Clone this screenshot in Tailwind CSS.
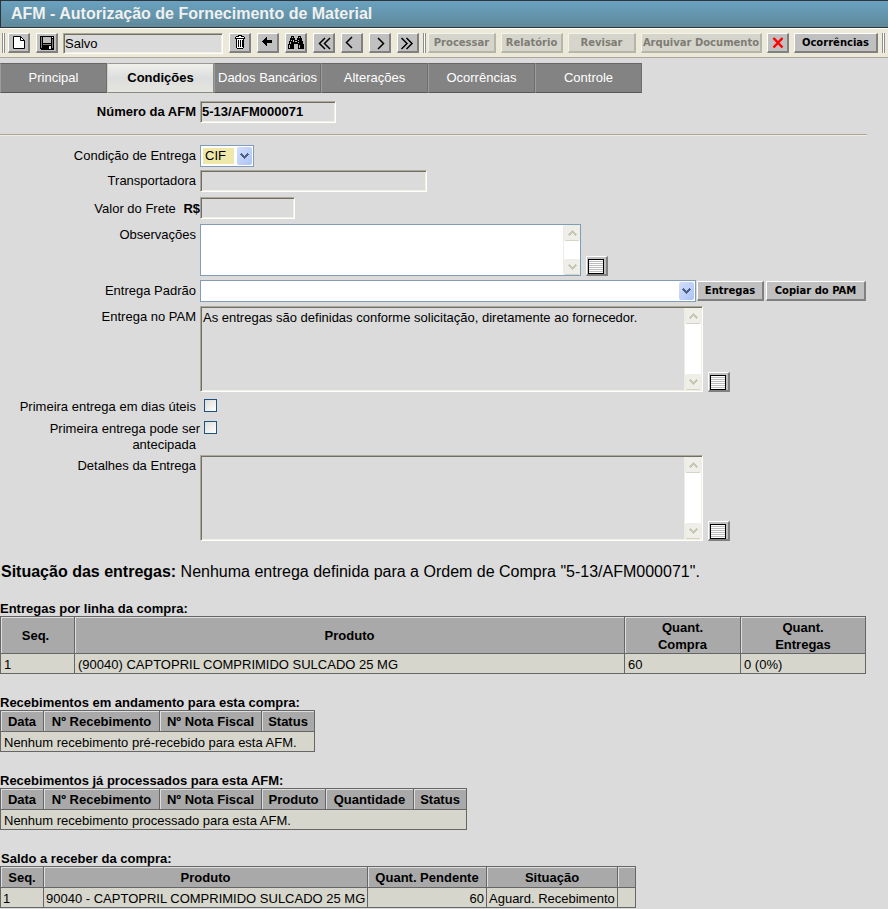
<!DOCTYPE html>
<html lang="pt-BR">
<head>
<meta charset="utf-8">
<meta name="viewport" content="width=device-width, initial-scale=1">
<title>AFM - Autorização de Fornecimento de Material</title>
<script src="https://cdn.jsdelivr.net/npm/@tailwindcss/browser@4"></script>
</head>
<body class="bg-[#dbdbdb] font-['Liberation_Sans',Arial,sans-serif] text-[13px] leading-4 text-black">

<svg class="hidden" aria-hidden="true">
  <symbol id="list" viewBox="0 0 16 15">
    <rect x="0.5" y="0.5" width="15" height="14" fill="#fff" stroke="#000"/>
    <path d="M1 2.5H15M1 4.5H15M1 6.5H15M1 8.5H15M1 10.5H15M1 12.5H15" stroke="#bdbdbd"/>
  </symbol>
  <symbol id="drop" viewBox="0 0 9 6"><path d="M1 0H2V1H3V2H4V3H5V2H6V1H7V0H8V1H9V2H8V3H7V4H6V5H5V6H4V5H3V4H2V3H1V2H0V1H1Z"/></symbol>
</svg>

<header class="flex h-7 items-center border-y border-l border-[#303438] bg-linear-to-b from-[#69a2c0] to-[#60899a] pl-[10px]">
  <h1 class="text-[16px] leading-6 font-bold text-[#f0f0ee]">AFM - Autorização de Fornecimento de Material</h1>
</header>

<div role="toolbar" aria-label="Ações" class="flex h-[30px] items-center border-t border-b border-t-white border-b-[#aca899] bg-[#ece9d8] pl-[2px] whitespace-nowrap">
  <span class="mr-[3px] h-5 w-[3px] border-x border-[#8d8d94] bg-white"></span>
  <div class="flex items-center gap-[6px]">
    <button aria-label="Novo" class="h-5 w-[22px] border-t border-l border-r-2 border-b-2 border-t-white border-l-white border-r-[#808080] border-b-[#808080] bg-[#c0c0c0]">
      <svg class="block h-[17px] w-[19px]" viewBox="1 1 19 17"><path d="M5.500 3.500H12.500L16.500 7.500V15.500H5.500Z" fill="#fff" stroke="#000"/><path d="M12.500 3.500V7.500H16.500" fill="none" stroke="#000"/></svg>
    </button>
    <button aria-label="Salvar" class="h-5 w-[22px] border-t border-l border-r-2 border-b-2 border-t-white border-l-white border-r-[#808080] border-b-[#808080] bg-[#c0c0c0]">
      <svg class="block h-[17px] w-[19px]" viewBox="1 1 19 17" shape-rendering="crispEdges"><path d="M4 3H18V17H5L4 16Z"/><path d="M5 4H6V15H5ZM16 6H17V15H16Z" fill="#808080"/><path d="M7 4H15V10H7Z" fill="#c0c0c0"/><path d="M16 4H17V5H16Z" fill="#fff"/><path d="M7 11H15V12H7Z" fill="#808080"/><path d="M13 13H15V16H13Z" fill="#e8e8e8"/></svg>
    </button>
    <input aria-label="Situação do registro" value="Salvo" readonly class="-ml-px h-[21px] w-[160px] border border-t-[#aca899] border-r-white border-b-white border-l-[#aca899] bg-[#dbdbdb] px-px shadow-[inset_1px_1px_0_#716f64,inset_-1px_-1px_0_#f1efe2] outline-none">
    <button aria-label="Excluir" class="h-5 w-[22px] border-t border-l border-r-2 border-b-2 border-t-white border-l-white border-r-[#808080] border-b-[#808080] bg-[#c0c0c0]">
      <svg class="block h-[17px] w-[19px]" viewBox="1 1 19 17" shape-rendering="crispEdges"><path d="M9 2H13V3H15V4H16V6H15V15H14V16H8V15H7V6H6V4H7V3H9Z"/><path d="M10 3H12V4H15V5H7V4H10ZM8 6H14V15H8Z" fill="#fff"/><path d="M9 7V14M11 7V14M13 7V14" stroke="#000" transform="translate(.5 0)"/><path d="M14 6H15V15H14Z"/></svg>
    </button>
    <button aria-label="Voltar" class="h-5 w-[22px] border-t border-l border-r-2 border-b-2 border-t-white border-l-white border-r-[#808080] border-b-[#808080] bg-[#c0c0c0]">
      <svg class="block h-[17px] w-[19px]" viewBox="1 1 19 17" shape-rendering="crispEdges"><path d="M5 8H6V7H7V6H8V5H9V4H10V7H15V10H10V13H9V12H8V11H7V10H6V9H5Z"/></svg>
    </button>
    <button aria-label="Pesquisar" class="h-5 w-[22px] border-t border-l border-r-2 border-b-2 border-t-white border-l-white border-r-[#808080] border-b-[#808080] bg-[#c0c0c0]">
      <svg class="block h-[17px] w-[19px]" viewBox="1 1 19 17" shape-rendering="crispEdges"><path d="M6 3H9V5H10V7H12V5H13V3H16V5H17V8H18V11H19V16H13V11H9V16H3V11H4V8H5V5H6Z"/><path d="M7 4H8V5H7ZM14 4H15V5H14ZM6 7H7V8H6ZM5 9H6V11H5ZM4 12H5V15H4ZM8 7H9V9H8ZM13 7H14V8H13ZM13 9H14V10H13ZM14 12H15V15H14ZM10 8H12V9H10Z" fill="#c0c0c0"/></svg>
    </button>
    <button aria-label="Primeiro" class="h-5 w-[22px] border-t border-l border-r-2 border-b-2 border-t-white border-l-white border-r-[#808080] border-b-[#808080] bg-[#c0c0c0]">
      <svg class="block h-[17px] w-[19px]" viewBox="1 1 19 17"><path d="M12 5L6.500 10.500L12 16M17 5L11.500 10.500L17 16" fill="none" stroke="#000" stroke-width="1.500"/></svg>
    </button>
    <button aria-label="Anterior" class="h-5 w-[22px] border-t border-l border-r-2 border-b-2 border-t-white border-l-white border-r-[#808080] border-b-[#808080] bg-[#c0c0c0]">
      <svg class="block h-[17px] w-[19px]" viewBox="1 1 19 17"><path d="M11 4L5.500 9.500L11 15" fill="none" stroke="#000" stroke-width="1.500"/></svg>
    </button>
    <button aria-label="Próximo" class="h-5 w-[22px] border-t border-l border-r-2 border-b-2 border-t-white border-l-white border-r-[#808080] border-b-[#808080] bg-[#c0c0c0]">
      <svg class="block h-[17px] w-[19px]" viewBox="1 1 19 17"><path d="M9 5L14.500 10.500L9 16" fill="none" stroke="#000" stroke-width="1.500"/></svg>
    </button>
    <button aria-label="Último" class="h-5 w-[22px] border-t border-l border-r-2 border-b-2 border-t-white border-l-white border-r-[#808080] border-b-[#808080] bg-[#c0c0c0]">
      <svg class="block h-[17px] w-[19px]" viewBox="1 1 19 17"><path d="M4.500 5L10 10.500L4.500 16M9.500 5L15 10.500L9.500 16" fill="none" stroke="#000" stroke-width="1.500"/></svg>
    </button>
  </div>
  <span class="mr-[2px] ml-1 h-5 w-[3px] border-x border-[#8d8d94] bg-white"></span>
  <div class="flex items-center gap-[5px] font-['DejaVu_Sans',Verdana,sans-serif] text-[10px] leading-4 font-bold">
    <button disabled class="h-5 w-[68px] border-t border-l border-r-2 border-b-2 border-t-[#f4f3ea] border-l-[#f4f3ea] border-r-[#b6b5aa] border-b-[#b6b5aa] bg-[#d6d5cb] text-[#7d7c74]">Processar</button>
    <button disabled class="h-5 w-[62px] border-t border-l border-r-2 border-b-2 border-t-[#f4f3ea] border-l-[#f4f3ea] border-r-[#b6b5aa] border-b-[#b6b5aa] bg-[#d6d5cb] text-[#7d7c74]">Relatório</button>
    <button disabled class="h-5 w-[68px] border-t border-l border-r-2 border-b-2 border-t-[#f4f3ea] border-l-[#f4f3ea] border-r-[#b6b5aa] border-b-[#b6b5aa] bg-[#d6d5cb] text-[#7d7c74]">Revisar</button>
    <button disabled class="h-5 w-[121px] border-t border-l border-r-2 border-b-2 border-t-[#f4f3ea] border-l-[#f4f3ea] border-r-[#b6b5aa] border-b-[#b6b5aa] bg-[#d6d5cb] text-[#7d7c74]">Arquivar Documento</button>
    <button aria-label="Cancelar" class="h-5 w-[22px] border-t border-l border-r-2 border-b-2 border-t-white border-l-white border-r-[#808080] border-b-[#808080] bg-[#c0c0c0]">
      <svg class="block h-[17px] w-[19px]" viewBox="1 1 19 17"><path d="M6.500 5L15.500 14.500M15.500 5L6.500 14.500" stroke="#f00" stroke-width="2.500"/></svg>
    </button>
    <button class="h-5 w-[84px] border-t border-l border-r-2 border-b-2 border-t-white border-l-white border-r-[#808080] border-b-[#808080] bg-[#c0c0c0]">Ocorrências</button>
  </div>
  <span class="ml-1 h-5 w-[3px] border-x border-[#8d8d94] bg-white"></span>
</div>

<nav class="mt-[5px] grid w-[642px] max-w-full grid-cols-6 text-center leading-[28px] text-white">
  <a href="#" class="border border-t-[#666] border-r-[#6e6e6e] border-b-[#585858] border-l-[#9c9c9c] bg-[#838383]">Principal</a>
  <a href="#" aria-current="page" class="border border-t-[#9a9a94] border-r-[#8c8c8c] border-b-[#8a8a84] border-l-[#d0d0cc] bg-linear-to-b from-[#f0f0ec] via-[#dcdedd] to-[#e6e5df] font-bold text-black">Condições</a>
  <a href="#" class="border border-t-[#666] border-r-[#6e6e6e] border-b-[#585858] border-l-[#9c9c9c] bg-[#838383]">Dados Bancários</a>
  <a href="#" class="border border-t-[#666] border-r-[#6e6e6e] border-b-[#585858] border-l-[#9c9c9c] bg-[#838383]">Alterações</a>
  <a href="#" class="border border-t-[#666] border-r-[#6e6e6e] border-b-[#585858] border-l-[#9c9c9c] bg-[#838383]">Ocorrências</a>
  <a href="#" class="border border-t-[#666] border-r-[#6e6e6e] border-b-[#585858] border-l-[#9c9c9c] bg-[#838383]">Controle</a>
</nav>

<form class="pt-2">
  <div class="grid grid-cols-[200px_1fr]">
    <label for="numero" class="pr-1 text-right leading-[22px] font-bold">Número da AFM</label>
    <input id="numero" value="5-13/AFM000071" readonly class="h-[22px] w-[136px] border border-t-[#aca899] border-r-white border-b-white border-l-[#aca899] bg-[#dbdbdb] px-px pb-[2px] font-bold shadow-[inset_1px_1px_0_#716f64,inset_-1px_-1px_0_#f1efe2] outline-none">
  </div>

  <hr class="mt-[11px] mr-[21px] h-[2px] border-t border-b border-t-[#aca899] border-b-[#eeece0]">

  <div class="mt-[9px] grid grid-cols-[200px_1fr]">
    <label for="condicao" class="pr-1 text-right leading-[22px]">Condição de Entrega</label>
    <div class="flex h-[22px] w-[54px] border border-[#7f9db9] bg-white p-px">
      <select id="condicao" class="my-px ml-px w-[31px] appearance-none bg-[#eee8aa] pl-[2px] outline-none"><option>CIF</option><option>FOB</option></select>
      <span class="pointer-events-none ml-auto flex w-[15px] items-center justify-center rounded-xs bg-linear-to-br from-[#d2defb] to-[#aec4f6]"><svg class="h-[6px] w-[9px] fill-[#4d6185]"><use href="#drop"/></svg></span>
    </div>
  </div>

  <div class="mt-[3px] grid grid-cols-[200px_1fr]">
    <label for="transp" class="pr-1 text-right leading-[22px]">Transportadora</label>
    <input id="transp" readonly class="h-[22px] w-[227px] border border-t-[#aca899] border-r-white border-b-white border-l-[#aca899] bg-[#dbdbdb] px-[2px] shadow-[inset_1px_1px_0_#716f64,inset_-1px_-1px_0_#f1efe2] outline-none">
  </div>

  <div class="mt-[5px] grid grid-cols-[200px_1fr]">
    <label for="frete" class="text-right leading-[24px]">Valor do Frete <b class="ml-1">R$</b></label>
    <input id="frete" readonly class="h-[22px] w-[95px] border border-t-[#aca899] border-r-white border-b-white border-l-[#aca899] bg-[#dbdbdb] px-[2px] shadow-[inset_1px_1px_0_#716f64,inset_-1px_-1px_0_#f1efe2] outline-none">
  </div>

  <div class="mt-[3px] grid grid-cols-[200px_1fr]">
    <label for="obs" class="pr-1 text-right leading-[22px]">Observações</label>
    <div class="flex items-end gap-[5px]">
      <div class="flex h-[52px] w-[381px] border border-[#7f9db9] bg-white">
        <textarea id="obs" class="flex-1 resize-none overflow-hidden p-[2px] outline-none"></textarea>
        <span class="flex w-[17px] flex-col justify-between border-l border-[#eeede5]" aria-hidden="true">
          <i class="flex h-4 items-center justify-center rounded-xs border border-b-[#d5d3c4] border-[#eeede5] bg-[#efeee9]"><svg class="h-[6px] w-[9px] rotate-180 fill-[#c6c7b5]"><use href="#drop"/></svg></i>
          <i class="flex h-4 items-center justify-center rounded-xs border border-b-[#d5d3c4] border-[#eeede5] bg-[#efeee9]"><svg class="h-[6px] w-[9px] fill-[#c6c7b5]"><use href="#drop"/></svg></i>
        </span>
      </div>
      <button type="button" aria-label="Ampliar observações" class="h-5 w-[22px] border-t border-l border-r-2 border-b-2 border-t-white border-l-white border-r-[#808080] border-b-[#808080] bg-[#c0c0c0] pt-px pl-px"><svg class="block h-[15px] w-4"><use href="#list"/></svg></button>
    </div>
  </div>

  <div class="mt-1 grid grid-cols-[200px_1fr]">
    <label for="padrao" class="pr-1 text-right leading-[22px]">Entrega Padrão</label>
    <div class="flex items-center">
      <div class="flex h-[22px] w-[496px] border border-[#7f9db9] bg-white p-px">
        <select id="padrao" class="flex-1 appearance-none bg-white pl-[2px] outline-none"><option></option></select>
        <span class="pointer-events-none flex w-[15px] items-center justify-center rounded-xs bg-linear-to-br from-[#d2defb] to-[#aec4f6]"><svg class="h-[6px] w-[9px] fill-[#4d6185]"><use href="#drop"/></svg></span>
      </div>
      <div class="ml-px flex gap-[2px] font-['DejaVu_Sans',Verdana,sans-serif] text-[10px] leading-4 font-bold">
        <button type="button" class="h-5 w-[67px] border-t border-l border-r-2 border-b-2 border-t-white border-l-white border-r-[#808080] border-b-[#808080] bg-[#c0c0c0]">Entregas</button>
        <button type="button" class="h-5 w-[100px] border-t border-l border-r-2 border-b-2 border-t-white border-l-white border-r-[#808080] border-b-[#808080] bg-[#c0c0c0]">Copiar do PAM</button>
      </div>
    </div>
  </div>

  <div class="mt-1 grid grid-cols-[200px_1fr]">
    <label for="pam" class="pr-1 text-right leading-[22px]">Entrega no PAM</label>
    <div class="flex items-end gap-[5px]">
      <div class="flex h-[86px] w-[503px] border border-t-[#aca899] border-r-white border-b-white border-l-[#aca899] p-px shadow-[inset_1px_1px_0_#716f64,inset_-1px_-1px_0_#f1efe2]">
        <textarea id="pam" readonly class="flex-1 resize-none overflow-hidden px-px pt-[2px] leading-4 outline-none">As entregas são definidas conforme solicitação, diretamente ao fornecedor.</textarea>
        <span class="flex w-[17px] flex-col justify-between border-l border-[#eeede5] bg-white" aria-hidden="true">
          <i class="flex h-4 items-center justify-center rounded-xs border border-b-[#d5d3c4] border-[#eeede5] bg-[#efeee9]"><svg class="h-[6px] w-[9px] rotate-180 fill-[#c6c7b5]"><use href="#drop"/></svg></i>
          <i class="flex h-4 items-center justify-center rounded-xs border border-b-[#d5d3c4] border-[#eeede5] bg-[#efeee9]"><svg class="h-[6px] w-[9px] fill-[#c6c7b5]"><use href="#drop"/></svg></i>
        </span>
      </div>
      <button type="button" aria-label="Ampliar entrega no PAM" class="h-5 w-[22px] border-t border-l border-r-2 border-b-2 border-t-white border-l-white border-r-[#808080] border-b-[#808080] bg-[#c0c0c0] pt-px pl-px"><svg class="block h-[15px] w-4"><use href="#list"/></svg></button>
    </div>
  </div>

  <div class="mt-[7px] grid grid-cols-[200px_1fr]">
    <label for="uteis" class="pr-1 text-right">Primeira entrega em dias úteis</label>
    <input id="uteis" type="checkbox" class="ml-1 size-[13px] appearance-none border border-[#1c5180] bg-linear-to-br from-[#dcdcd7] to-white checked:bg-[#21a121]">
  </div>
  <div class="mt-[6px] grid grid-cols-[200px_1fr]">
    <label for="antecipada" class="text-right">Primeira entrega pode ser <span class="block pr-1">antecipada</span></label>
    <input id="antecipada" type="checkbox" class="ml-1 size-[13px] appearance-none border border-[#1c5180] bg-linear-to-br from-[#dcdcd7] to-white checked:bg-[#21a121]">
  </div>

  <div class="mt-[2px] grid grid-cols-[200px_1fr]">
    <label for="detalhes" class="pr-1 text-right leading-[22px]">Detalhes da Entrega</label>
    <div class="flex items-end gap-[5px]">
      <div class="flex h-[86px] w-[503px] border border-t-[#aca899] border-r-white border-b-white border-l-[#aca899] p-px shadow-[inset_1px_1px_0_#716f64,inset_-1px_-1px_0_#f1efe2]">
        <textarea id="detalhes" readonly class="flex-1 resize-none overflow-hidden px-px pt-[2px] leading-4 outline-none"></textarea>
        <span class="flex w-[17px] flex-col justify-between border-l border-[#eeede5] bg-white" aria-hidden="true">
          <i class="flex h-4 items-center justify-center rounded-xs border border-b-[#d5d3c4] border-[#eeede5] bg-[#efeee9]"><svg class="h-[6px] w-[9px] rotate-180 fill-[#c6c7b5]"><use href="#drop"/></svg></i>
          <i class="flex h-4 items-center justify-center rounded-xs border border-b-[#d5d3c4] border-[#eeede5] bg-[#efeee9]"><svg class="h-[6px] w-[9px] fill-[#c6c7b5]"><use href="#drop"/></svg></i>
        </span>
      </div>
      <button type="button" aria-label="Ampliar detalhes" class="h-5 w-[22px] border-t border-l border-r-2 border-b-2 border-t-white border-l-white border-r-[#808080] border-b-[#808080] bg-[#c0c0c0] pt-px pl-px"><svg class="block h-[15px] w-4"><use href="#list"/></svg></button>
    </div>
  </div>
</form>

<main>
  <p class="mt-[19px] pl-px text-[16px] leading-6"><b>Situação das entregas:</b> Nenhuma entrega definida para a Ordem de Compra "5-13/AFM000071".</p>

  <section class="mt-4 pr-[22px]">
    <h2 class="pt-[2px] leading-[14px] font-bold">Entregas por linha da compra:</h2>
    <table class="w-full table-fixed border-collapse [&_td]:h-5 [&_td]:border [&_td]:border-[#666] [&_td]:bg-[#d6d6cc] [&_td]:px-[3px] [&_td]:pt-[2px] [&_th]:border [&_th]:border-[#666] [&_th]:bg-[#a9a9a9] [&_th]:pt-px [&_th]:shadow-[inset_1px_1px_0_#dedede]">
      <thead><tr class="h-[37px] leading-[17px]"><th class="w-[74px] pr-1">Seq.</th><th>Produto</th><th class="w-[116px]">Quant.<br>Compra</th><th class="w-[125px]">Quant.<br>Entregas</th></tr></thead>
      <tbody><tr><td>1</td><td>(90040) CAPTOPRIL COMPRIMIDO SULCADO 25 MG</td><td>60</td><td>0 (0%)</td></tr></tbody>
    </table>
  </section>

  <section class="mt-5">
    <h2 class="pt-[2px] leading-[14px] font-bold">Recebimentos em andamento para esta compra:</h2>
    <table class="w-[315px] table-fixed border-collapse [&_td]:h-5 [&_td]:border [&_td]:border-[#666] [&_td]:bg-[#d6d6cc] [&_td]:px-[3px] [&_td]:pt-[2px] [&_th]:h-[21px] [&_th]:border [&_th]:border-[#666] [&_th]:bg-[#a9a9a9] [&_th]:pt-[2px] [&_th]:shadow-[inset_1px_1px_0_#dedede]">
      <thead><tr><th class="w-[43px]">Data</th><th class="w-[116px]">Nº Recebimento</th><th class="w-[102px]">Nº Nota Fiscal</th><th>Status</th></tr></thead>
      <tbody><tr><td colspan="4">Nenhum recebimento pré-recebido para esta AFM.</td></tr></tbody>
    </table>
  </section>

  <section class="mt-5">
    <h2 class="pt-[2px] leading-[14px] font-bold">Recebimentos já processados para esta AFM:</h2>
    <table class="w-[467px] table-fixed border-collapse [&_td]:h-5 [&_td]:border [&_td]:border-[#666] [&_td]:bg-[#d6d6cc] [&_td]:px-[3px] [&_td]:pt-[2px] [&_th]:h-[21px] [&_th]:border [&_th]:border-[#666] [&_th]:bg-[#a9a9a9] [&_th]:pt-[2px] [&_th]:shadow-[inset_1px_1px_0_#dedede]">
      <thead><tr><th class="w-[43px]">Data</th><th class="w-[116px]">Nº Recebimento</th><th class="w-[102px]">Nº Nota Fiscal</th><th class="w-16">Produto</th><th class="w-[88px]">Quantidade</th><th>Status</th></tr></thead>
      <tbody><tr><td colspan="6">Nenhum recebimento processado para esta AFM.</td></tr></tbody>
    </table>
  </section>

  <section class="mt-5">
    <h2 class="pt-[2px] pl-px leading-[14px] font-bold">Saldo a receber da compra:</h2>
    <table class="w-[636px] table-fixed border-collapse [&_td]:h-5 [&_td]:border [&_td]:border-[#666] [&_td]:bg-[#d6d6cc] [&_td]:px-[2px] [&_td]:pt-[2px] [&_th]:h-[21px] [&_th]:border [&_th]:border-[#666] [&_th]:bg-[#a9a9a9] [&_th]:pt-[2px] [&_th]:shadow-[inset_1px_1px_0_#dedede]">
      <thead><tr><th class="w-[43px]">Seq.</th><th class="w-[324px]">Produto</th><th class="w-[119px]">Quant. Pendente</th><th class="w-[131px]">Situação</th><th aria-label="Ações"></th></tr></thead>
      <tbody><tr><td>1</td><td class="whitespace-nowrap">90040 - CAPTOPRIL COMPRIMIDO SULCADO 25 MG</td><td class="text-right">60</td><td class="whitespace-nowrap">Aguard. Recebimento</td><td></td></tr></tbody>
    </table>
  </section>
</main>
</body>
</html>
